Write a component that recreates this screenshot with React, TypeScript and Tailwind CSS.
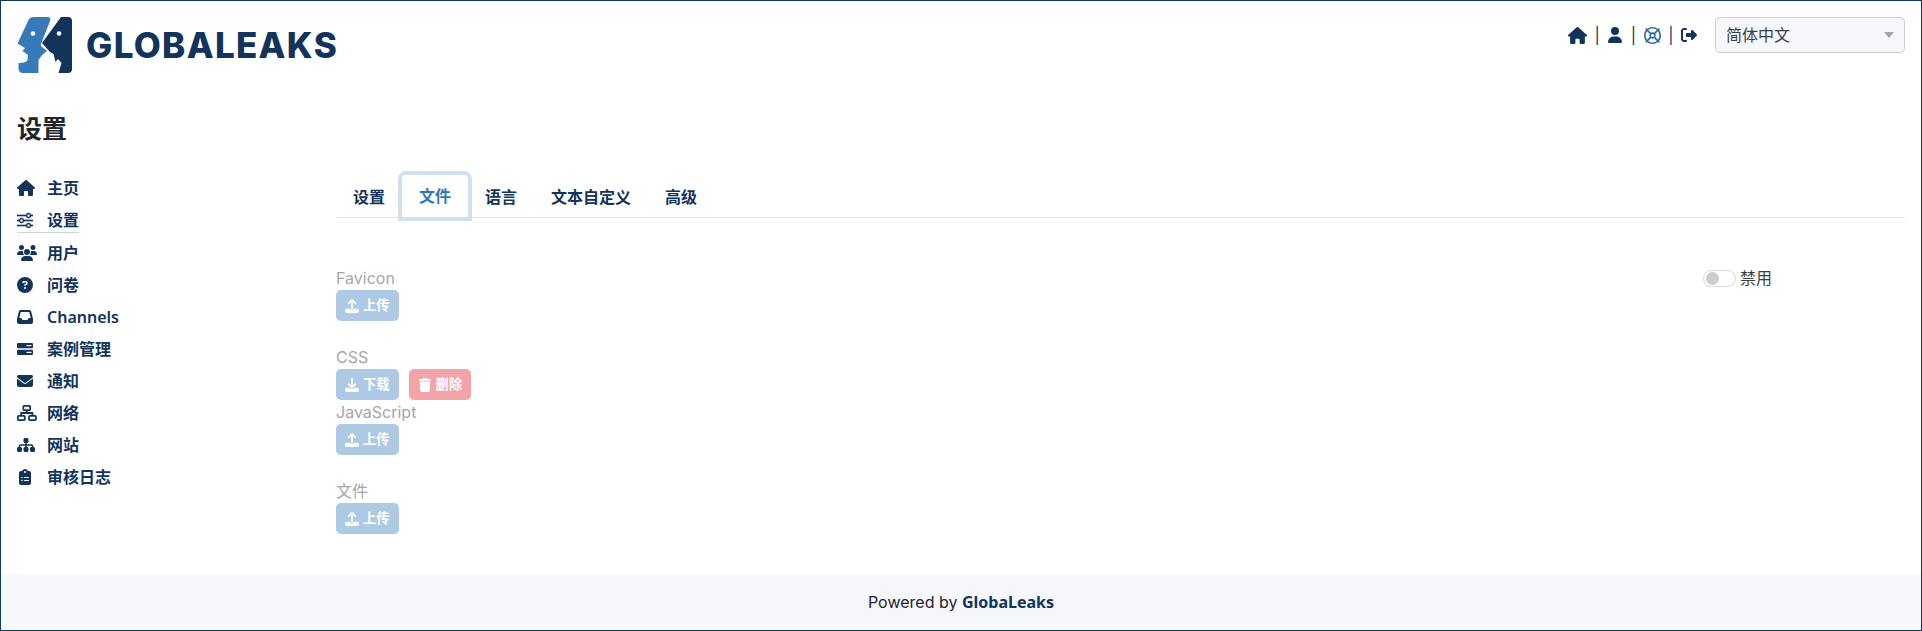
import React from "react";
import { FaHouse, FaUser, FaRegLifeRing, FaRightFromBracket, FaUsers, FaCircleQuestion, FaInbox, FaEnvelope, FaSitemap, FaClipboardList, FaUpload, FaDownload, FaTrash } from "react-icons/fa6";
import { BsSliders } from "react-icons/bs";

const ServerIcon = () => (
  <svg width="16" height="12" viewBox="0 0 16 12">
    <rect x="0" y="0" width="16" height="5.3" rx="1.2" fill="currentColor" />
    <rect x="0" y="6.7" width="16" height="5.3" rx="1.2" fill="currentColor" />
    <rect x="9.5" y="2" width="5" height="1.2" fill="#fff" />
    <rect x="9.5" y="8.8" width="5" height="1.2" fill="#fff" />
  </svg>
);

const NetworkIcon = () => (
  <svg width="20" height="16" viewBox="0 0 20 16" fill="none" stroke="currentColor" strokeWidth="1.8">
    <rect x="6.3" y="0.9" width="6.9" height="4.2" rx="0.8" />
    <rect x="0.9" y="10.9" width="6.9" height="4.2" rx="0.8" />
    <rect x="12" y="10.9" width="6.9" height="4.2" rx="0.8" />
    <path d="M9.8 5 V8 M4.2 11 V8 H15.4 V11" />
  </svg>
);

const nav = [
  { icon: <FaHouse size={18} />, label: "主页" },
  { icon: <BsSliders size={16} stroke="currentColor" strokeWidth={0.6} />, label: "设置", active: true },
  { icon: <FaUsers size={20} />, label: "用户" },
  { icon: <FaCircleQuestion size={16} />, label: "问卷" },
  { icon: <FaInbox size={16} />, label: "Channels" },
  { icon: <ServerIcon />, label: "案例管理" },
  { icon: <FaEnvelope size={16} />, label: "通知" },
  { icon: <NetworkIcon />, label: "网络" },
  { icon: <FaSitemap size={18} />, label: "网站" },
  { icon: <FaClipboardList size={16} />, label: "审核日志" },
];

const Logo = () => (
  <svg width="56" height="57" viewBox="0 0 56 57" className="shrink-0">
    <path fill="#377ab9" d="M12 2 C13 0.7 15 0 17 0 H30 C33 0 34 2 33 4 L24 27 C23.5 28.5 24 29 25 30 L30 34 L25 38 L21.5 43 V56 H6 C3 56 1.5 54 1.5 51 V46 C4 46 9 46 10.5 43 L11 38 L5.5 34 L8 31 L0.5 26.5 Z" />
    <path fill="#12345a" d="M44 0 H51 C54 0 55 2 55 4 V52 C55 54 54 56 51 56 H41.5 L44.5 46 L41 42 L38.5 45 L36.5 37 L33 35 L25 26 Z" />
    <circle cx="16" cy="16.5" r="2.3" fill="#fff" />
    <circle cx="42" cy="16.5" r="2.3" fill="#fff" />
  </svg>
);

const Btn = ({ icon, label, red }: { icon: React.ReactNode; label: string; red?: boolean }) => (
  <div className={`h-[31px] w-fit pl-[9px] pr-[9px] rounded-[5px] flex items-center gap-[4px] text-white text-[13.3px] font-semibold ${red ? "bg-[#f3a4a6]" : "bg-[#aec9e4]"}`}>
    {icon}
    <span>{label}</span>
  </div>
);

const Upload = () => <Btn icon={<FaUpload size={14} />} label="上传" />;

const Label = ({ children }: { children: React.ReactNode }) => (
  <div className="text-[16px] leading-[24px] text-[#a6a6aa]">{children}</div>
);

export default function App() {
  return (
    <div className="h-[631px] border border-[#0f3a5f] flex flex-col font-['Inter','Noto_Sans_CJK_SC',sans-serif] text-[#212529] overflow-hidden bg-white">
      <div className="flex-1 flex flex-col">
        <header className="flex items-start justify-between pl-4 pr-4 pt-4 h-[112px]">
          <div className="flex items-center gap-[13px]">
            <Logo />
            <span className="text-[35px] font-extrabold tracking-[1.3px] text-[#12345a] leading-none font-['Inter',sans-serif]">GLOBALEAKS</span>
          </div>
          <div className="flex items-center">
            <div className="flex items-center gap-[7.5px] mr-[18px] text-[#12345a] text-[16px]">
              <FaHouse size={19} />
              <span>|</span>
              <FaUser size={16} />
              <span>|</span>
              <FaRegLifeRing size={17} className="text-[#2b6aa5]" />
              <span>|</span>
              <FaRightFromBracket size={16} />
            </div>
            <div className="w-[190px] h-[36px] border border-[#cbcdd0] rounded-[5px] bg-[#f5f7fb] flex items-center justify-between pl-[10px] pr-[10px] text-[16px] text-[#3b3f44]">
              <span>简体中文</span>
              <svg width="10" height="6" viewBox="0 0 10 6"><path d="M0 0 H10 L5 6 Z" fill="#a3a5a8" /></svg>
            </div>
          </div>
        </header>
        <div className="flex">
          <aside className="w-[335px] shrink-0 pl-4">
            <h1 className="text-[25px] font-semibold leading-[32px] text-[#212529] mb-[27.4px]">设置</h1>
            <nav className="flex flex-col text-[#12345a] font-['Noto_Sans','Noto_Sans_CJK_SC',sans-serif] font-semibold text-[16px]">
              {nav.map((n) => (
                <div key={n.label} className="h-[32.1px] flex items-center">
                  <div className={`flex items-center h-[24px] ${n.active ? "border-b border-[#c8d3e6]" : ""}`}>
                    <span className="w-[30px] flex items-center shrink-0">{n.icon}</span>
                    <span>{n.label}</span>
                  </div>
                </div>
              ))}
            </nav>
          </aside>
          <main className="flex-1 pr-4 pt-[60px] min-w-0">
            <div className="flex items-end h-[45px] border-b border-[#dee5f0] text-[16px] font-semibold text-[#12345a]">
              <div className="px-[17px] h-[40px] flex items-center">设置</div>
              <div className="relative z-10 -mb-[4px] -mx-[4px] w-[74px] h-[50px] shrink-0 flex items-center justify-center border-[4px] border-[#cfe0f0] rounded-t-[8px] text-[#2f75b5] bg-white">文件</div>
              <div className="px-[17px] h-[40px] flex items-center">语言</div>
              <div className="px-[17px] h-[40px] flex items-center">文本自定义</div>
              <div className="px-[17px] h-[40px] flex items-center">高级</div>
            </div>
            <div className="pt-[48px]">
              <div className="flex justify-between items-start">
                <div>
                  <Label>Favicon</Label>
                  <Upload />
                </div>
                <div className="w-[202px] flex items-center h-[24px] gap-[4px] text-[16px] text-[#3b3f44]">
                  <div className="w-[33px] h-[17px] rounded-full border border-[#d5d5d5] flex items-center pl-[2px]">
                    <div className="w-[13px] h-[13px] rounded-full bg-[#cccccc]" />
                  </div>
                  <span>禁用</span>
                </div>
              </div>
              <div className="mt-[24px]">
                <Label>CSS</Label>
                <div className="flex gap-[10px]">
                  <Btn icon={<FaDownload size={14} />} label="下载" />
                  <Btn icon={<FaTrash size={14} />} label="删除" red />
                </div>
              </div>
              <div>
                <Label>JavaScript</Label>
                <Upload />
              </div>
              <div className="mt-[24px]">
                <Label>文件</Label>
                <Upload />
              </div>
            </div>
          </main>
        </div>
      </div>
      <footer className="h-[56px] bg-[#f5f7fb] flex items-center justify-center text-[16px] text-[#212529]">
        <span>Powered by <span className="font-['Noto_Sans',sans-serif] font-bold text-[#12345a]">GlobaLeaks</span></span>
      </footer>
    </div>
  );
}
